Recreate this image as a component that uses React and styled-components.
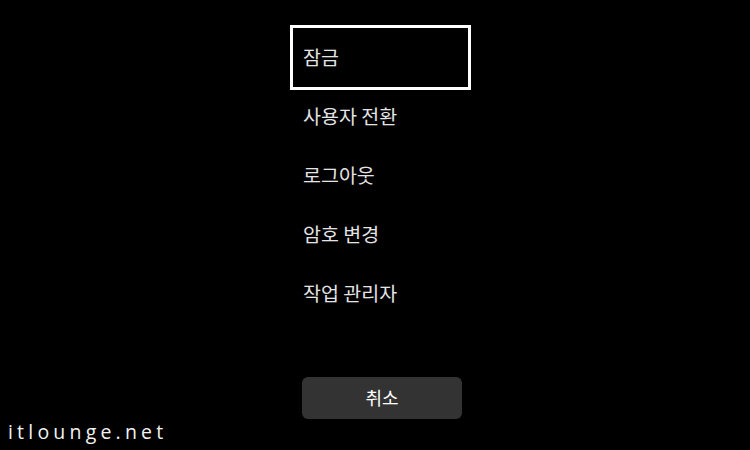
import React from 'react'
import styled, { createGlobalStyle } from 'styled-components'

const GlobalStyle = createGlobalStyle`
  html, body {
    margin: 0;
    padding: 0;
    background: #000;
  }
  body {
    width: 750px;
    height: 450px;
    overflow: hidden;
    font-family: "Noto Sans CJK KR", "Noto Sans", sans-serif;
  }
`

const Screen = styled.div`
  position: relative;
  width: 750px;
  height: 450px;
  background: #000;
  display: flex;
  justify-content: flex-start;
`

const Menu = styled.div`
  display: flex;
  flex-direction: column;
  margin-left: 293px;
  padding-top: 28px;
  width: 175px;
`

const Item = styled.div`
  height: 59px;
  display: flex;
  align-items: center;
  padding-left: 10px;
  padding-bottom: 3px;
  color: #e4e4e4;
  font-size: 19.5px;
  box-sizing: border-box;
  outline: ${p => (p.focused ? '3px solid #fff' : 'none')};
`

const CancelButton = styled.button`
  margin-top: 54px;
  margin-left: 9px;
  width: 160px;
  height: 42px;
  border: none;
  border-radius: 6px;
  background: #333333;
  color: #fff;
  font-family: "Noto Sans CJK KR", sans-serif;
  font-size: 18px;
  padding-bottom: 4px;
  display: flex;
  align-items: center;
  justify-content: center;
`

const Watermark = styled.div`
  position: absolute;
  left: 8px;
  bottom: 9px;
  color: #f2f2f2;
  font-family: "Open Sans", sans-serif;
  font-size: 19.5px;
  letter-spacing: 4.2px;
  line-height: 1;
`

const items = ['잠금', '사용자 전환', '로그아웃', '암호 변경', '작업 관리자']

export default function App() {
  return (
    <>
      <GlobalStyle />
      <Screen>
        <Menu>
          {items.map((label, i) => (
            <Item key={label} focused={i === 0}>{label}</Item>
          ))}
          <CancelButton>취소</CancelButton>
        </Menu>
        <Watermark>itlounge.net</Watermark>
      </Screen>
    </>
  )
}
